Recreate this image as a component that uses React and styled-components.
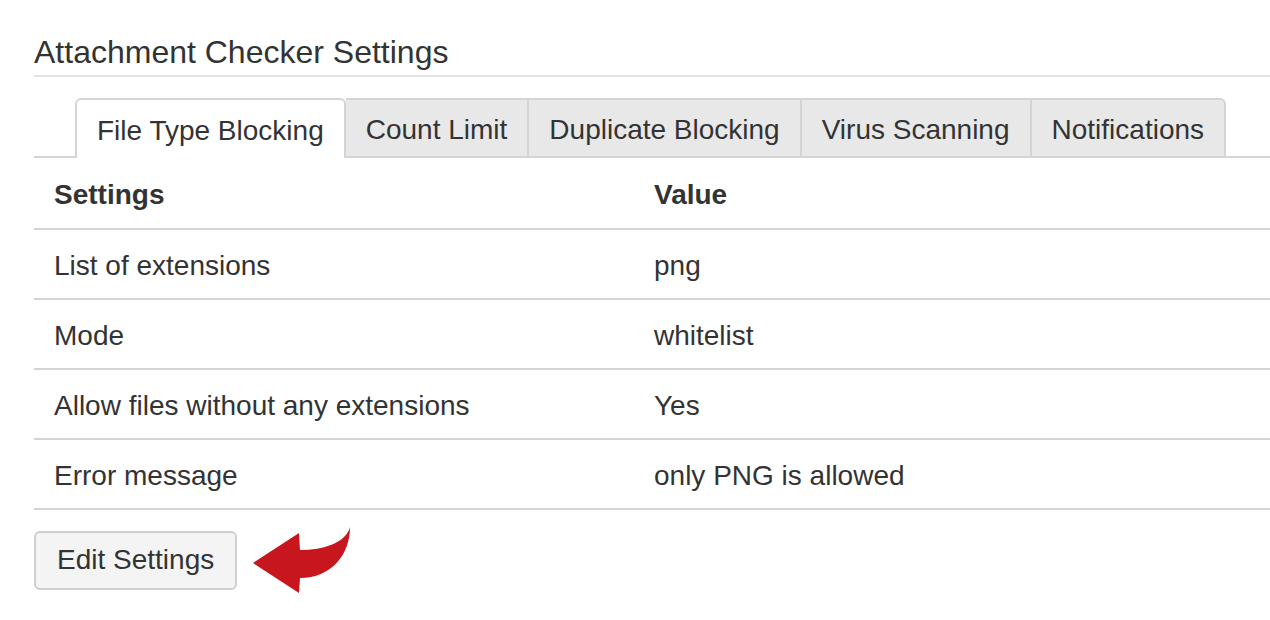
import React, { useState } from "react";
import styled, { createGlobalStyle } from "styled-components";

const tabs = [
  "File Type Blocking",
  "Count Limit",
  "Duplicate Blocking",
  "Virus Scanning",
  "Notifications",
];

const rows = [
  ["List of extensions", "png"],
  ["Mode", "whitelist"],
  ["Allow files without any extensions", "Yes"],
  ["Error message", "only PNG is allowed"],
];

function App() {
  const [active, setActive] = useState(0);

  return (
    <Page>
      <GlobalStyle />
      <Title>Attachment Checker Settings</Title>
      <TabBar>
        {tabs.map((t, i) => (
          <Tab key={t} active={i === active} onClick={() => setActive(i)}>
            {t}
          </Tab>
        ))}
      </TabBar>
      <Table>
        <thead>
          <tr>
            <HeadCell>Settings</HeadCell>
            <HeadCell>Value</HeadCell>
          </tr>
        </thead>
        <tbody>
          {rows.map(([name, value]) => (
            <tr key={name}>
              <Cell>{name}</Cell>
              <Cell>{value}</Cell>
            </tr>
          ))}
        </tbody>
      </Table>
      <Actions>
        <Button>Edit Settings</Button>
        <Arrow viewBox="0 0 102 70" width="102" height="70">
          <path
            fill="#c8161e"
            d="M2 38 L48 8 L49 25 C72 25 95 18 99 2 C99 30 80 53 49 53 L48 68 Z"
          />
        </Arrow>
      </Actions>
    </Page>
  );
}

const GlobalStyle = createGlobalStyle`
  body {
    margin: 0;
    background: #fff;
    font-family: "Liberation Sans", Arial, sans-serif;
    color: #333;
  }
`;

const Page = styled.div`
  padding: 32px 0 0 34px;
  width: 1236px;
  overflow: hidden;
`;

const Title = styled.h2`
  margin: 0;
  font-size: 32px;
  font-weight: 400;
  line-height: 40px;
  padding-bottom: 3px;
  border-bottom: 2px solid #e4e4e4;
`;

const TabBar = styled.div`
  display: flex;
  align-items: flex-end;
  margin-top: 21px;
  padding-left: 41px;
  border-bottom: 2px solid #d4d4d4;
`;

const Tab = styled.div`
  box-sizing: border-box;
  display: flex;
  align-items: center;
  padding: 3px 20px 0;
  font-size: 28px;
  margin-bottom: ${(props) => (props.active ? "-2px" : "0")};
  height: ${(props) => (props.active ? "60px" : "58px")};
  background: ${(props) => (props.active ? "#fff" : "#e8e8e8")};
  border: 2px solid #d4d4d4;
  border-bottom: none;
  border-left: ${(props) => (props.active ? "2px solid #d4d4d4" : "none")};
  border-radius: ${(props) => (props.active ? "6px 6px 0 0" : "0")};
  cursor: pointer;

  &:last-child {
    border-top-right-radius: 6px;
  }
`;

const Table = styled.table`
  width: 100%;
  border-collapse: collapse;
  font-size: 28px;
`;

const HeadCell = styled.th`
  text-align: left;
  font-weight: 700;
  height: 67px;
  padding: 3px 20px 0;
  border-bottom: 2px solid #d4d4d4;

  &:first-child {
    width: 560px;
  }
`;

const Cell = styled.td`
  height: 65px;
  padding: 3px 20px 0;
  border-bottom: 2px solid #d4d4d4;
`;

const Actions = styled.div`
  display: flex;
  align-items: center;
  gap: 14px;
  margin-top: 15px;
`;

const Button = styled.button`
  font-family: "Liberation Sans", Arial, sans-serif;
  font-size: 28px;
  color: #333;
  height: 59px;
  padding: 0 21px;
  background: #f4f4f4;
  border: 2px solid #cfcfcf;
  border-radius: 6px;
  cursor: pointer;
`;

const Arrow = styled.svg`
  display: block;
`;

export default App;
